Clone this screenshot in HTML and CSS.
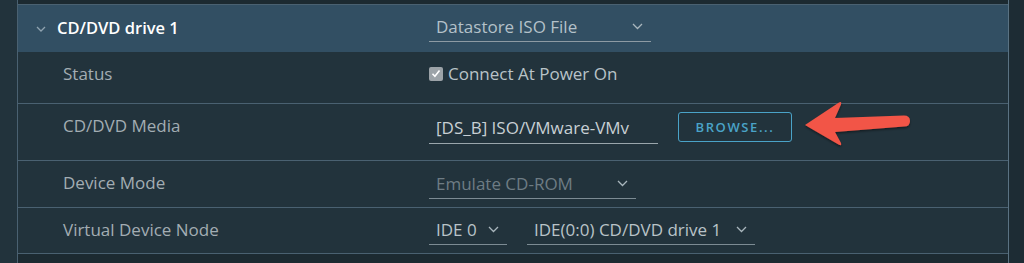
FILE: index.html
```html
<!DOCTYPE html>
<html lang="en">
<head>
    <meta charset="UTF-8">
    <title>Edit Settings - CD/DVD drive 1</title>
    <link rel="stylesheet" href="styles.css">
</head>
<body>
    <div class="frame">
        <div class="panel">
            <div class="strip"></div>
            <div class="row header">
                <div class="label">
                    <svg class="caret" width="10" height="6" viewBox="0 0 10 6"><path d="M1 1 L5 5 L9 1" fill="none" stroke="#8fa3b0" stroke-width="1.3"/></svg>
                    <span>CD/DVD drive 1</span>
                </div>
                <div class="value">
                    <div class="select wide">
                        <span>Datastore ISO File</span>
                        <svg class="chev" width="11" height="7" viewBox="0 0 11 7"><path d="M1 1 L5.5 5.5 L10 1" fill="none" stroke="#a9b6bd" stroke-width="1.3"/></svg>
                    </div>
                </div>
            </div>

            <div class="row status">
                <div class="label">Status</div>
                <div class="value">
                    <label class="check">
                        <span class="box">
                            <svg width="10" height="9" viewBox="0 0 10 9"><path d="M1.5 4.8 L3.9 7.2 L8.5 1.5" fill="none" stroke="#fff" stroke-width="1.6"/></svg>
                        </span>
                        Connect At Power On
                    </label>
                </div>
            </div>

            <div class="row media">
                <div class="label">CD/DVD Media</div>
                <div class="value">
                    <div class="input">[DS_B] ISO/VMware-VMv</div>
                    <button class="browse">BROWSE...</button>
                </div>
            </div>

            <div class="row mode">
                <div class="label">Device Mode</div>
                <div class="value">
                    <div class="select mid disabled">
                        <span>Emulate CD-ROM</span>
                        <svg class="chev" width="11" height="7" viewBox="0 0 11 7"><path d="M1 1 L5.5 5.5 L10 1" fill="none" stroke="#a9b6bd" stroke-width="1.3"/></svg>
                    </div>
                </div>
            </div>

            <div class="row node">
                <div class="label">Virtual Device Node</div>
                <div class="value">
                    <div class="select small">
                        <span>IDE 0</span>
                        <svg class="chev" width="11" height="7" viewBox="0 0 11 7"><path d="M1 1 L5.5 5.5 L10 1" fill="none" stroke="#a9b6bd" stroke-width="1.3"/></svg>
                    </div>
                    <div class="select drive">
                        <span>IDE(0:0) CD/DVD drive 1</span>
                        <svg class="chev" width="11" height="7" viewBox="0 0 11 7"><path d="M1 1 L5.5 5.5 L10 1" fill="none" stroke="#a9b6bd" stroke-width="1.3"/></svg>
                    </div>
                </div>
            </div>
            <div class="strip bottom"></div>

            <!-- callout arrow pointing at the browse button -->
            <svg class="arrow" width="116" height="54" viewBox="0 0 116 54">
                <defs>
                    <filter id="shadow" x="-10%" y="-20%" width="130%" height="150%">
                        <feDropShadow dx="0" dy="1.5" stdDeviation="1.2" flood-color="#000" flood-opacity="0.45"/>
                    </filter>
                </defs>
                <path d="M5 28 L39 5.5 Q42 4 41 7.5 L35 21 L104 18.5 Q110 18.5 110 24 Q110 29.5 104 29.5 L35 35 L41 46 Q42 49.5 38.5 47.5 Z" fill="#f25546" filter="url(#shadow)"/>
            </svg>
        </div>
    </div>
</body>
</html>
```

FILE: styles.css
```css
body {
    margin: 0;
    background: #1d2c34;
    font-family: "Open Sans", "Liberation Sans", sans-serif;
    font-size: 17px;
    color: #a3adb3;
}
.frame {
    padding-left: 17px;
    height: 263px;
    background: #22333c;
    width: 992px;
    overflow: hidden;
}
.panel {
    position: relative;
    border-left: 1px solid #4a6171;
    border-right: 1px solid #5a7282;
    background: #22333c;
    width: 990px;
}
.strip {
    height: 4px;
    background: #1c2a31;
    border-bottom: 1px solid #4a6171;
}
.strip.bottom {
    height: 10px;
    border-bottom: none;
}
.row {
    display: grid;
    grid-template-columns: 411px 1fr;
    align-items: start;
    border-bottom: 1px solid #4a6171;
}
.label {
    padding-left: 45px;
    padding-top: 10px;
    line-height: 23px;
}
.value {
    display: flex;
    align-items: center;
    gap: 20px;
    padding-top: 6px;
}
.header {
    background: #324f63;
    height: 47px;
    border-bottom: none;
}
.header .label {
    padding-left: 18px;
    padding-top: 11px;
    display: flex;
    align-items: center;
    gap: 11px;
    color: #ffffff;
    font-size: 16.5px;
    font-weight: 600;
}
.caret {
    margin-top: 2px;
}
.status { height: 51px; }
.status .value { padding-top: 10px; }
.media { height: 56px; }
.media .value { padding-top: 8px; }
.mode { height: 46px; }
.node { height: 45px; }

.select {
    display: flex;
    align-items: center;
    justify-content: space-between;
    padding: 0 8px 0 7px;
    height: 31px;
    border-bottom: 1px solid #7c8b93;
    color: #b9c3c8;
    box-sizing: border-box;
}
.select.wide { width: 222px; }
.select.mid { width: 207px; margin-top: 1px; }
.select.small { width: 78px; }
.select.drive { width: 228px; }
.select.disabled { color: #6e7c84; }
.header .select { color: #b4c1c9; border-bottom-color: #8d9ba4; }

.check {
    display: flex;
    align-items: center;
    gap: 5px;
    color: #b9c3c8;
    line-height: 23px;
}
.box {
    width: 14px;
    height: 14px;
    border-radius: 2px;
    background: #9ca3a8;
    display: flex;
    align-items: center;
    justify-content: center;
}
.input {
    width: 229px;
    box-sizing: border-box;
    padding: 0 7px;
    height: 32px;
    line-height: 31px;
    border-bottom: 1px solid #9aa6ac;
    color: #c8d0d4;
}
.browse {
    width: 114px;
    height: 30px;
    background: transparent;
    border: 1px solid #4aa3c8;
    border-radius: 3px;
    color: #4aa3c8;
    font-family: inherit;
    font-size: 13px;
    font-weight: 600;
    letter-spacing: 1.6px;
    margin-bottom: 2px;
}
.arrow {
    position: absolute;
    left: 782px;
    top: 97px;
}
```
